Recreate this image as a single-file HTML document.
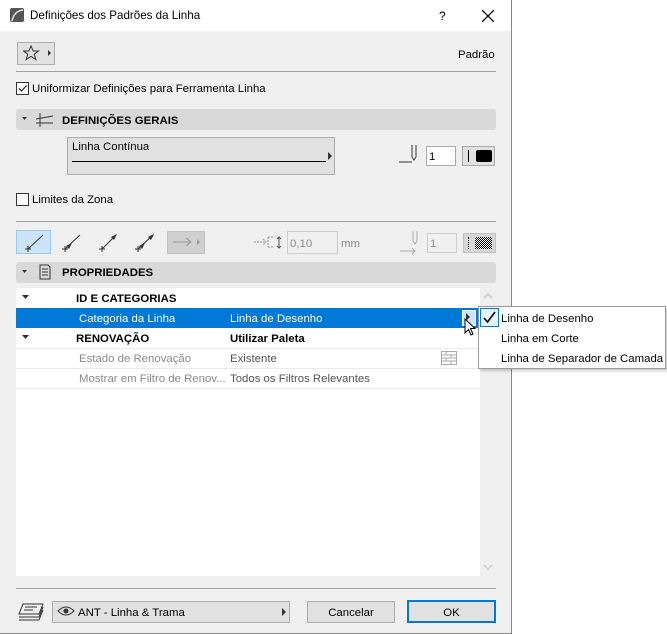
<!DOCTYPE html>
<html><head><meta charset="utf-8"><style>
*{margin:0;padding:0;box-sizing:border-box}
body{width:667px;height:634px;background:#fff;position:relative;overflow:hidden;font-family:"Liberation Sans",sans-serif;font-size:11.4px;color:#000}
.a{position:absolute}
.t{position:absolute;white-space:nowrap;line-height:14px;margin-top:1px}
.b{font-weight:bold}
.g{color:#8a8a8a}
</style></head><body>
<div class="a" style="left:0;top:0;width:512px;height:634px;background:#f0f0f0;border-right:1px solid #888;border-bottom:1px solid #888"></div>
<div class="a" style="left:0;top:0;width:511px;height:31px;background:#fff"></div>
<svg class="a" style="left:10px;top:8px" width="14" height="14"><rect width="14" height="14" rx="2" fill="#555"/><path d="M2 13 Q4 3 13 2" stroke="#ddd" stroke-width="1.5" fill="none"/></svg>
<div class="t" style="left:30px;top:8px;font-size:11.6px">Definições dos Padrões da Linha</div>
<div class="t" style="left:439px;top:8px;font-size:12px">?</div>
<svg class="a" style="left:482px;top:10px" width="12" height="12"><path d="M0 0L12 12M12 0L0 12" stroke="#000" stroke-width="1.2"/></svg>

<div class="a" style="left:17px;top:42px;width:38px;height:23px;background:#e1e1e1;border:1px solid #adadad"></div>
<svg class="a" style="left:23px;top:45px" width="30" height="17"><path d="M8 1L10.2 6H15.5L11.2 9.2L12.8 14.5L8 11.3L3.2 14.5L4.8 9.2L0.5 6H5.8Z" fill="none" stroke="#333"/><path d="M25 5L28 8L25 11Z" fill="#333"/></svg>
<div class="t" style="left:458px;top:47px">Padrão</div>
<div class="a" style="left:16px;top:71px;width:480px;height:1px;background:#a0a0a0"></div>

<div class="a" style="left:16px;top:82px;width:13px;height:13px;border:1px solid #333;background:#fff"></div>
<svg class="a" style="left:17px;top:83px" width="11" height="11"><path d="M2 5.5L4.5 8L9.5 2.5" stroke="#222" fill="none" stroke-width="1.2"/></svg>
<div class="t" style="left:32px;top:81px">Uniformizar Definições para Ferramenta Linha</div>

<div class="a" style="left:16px;top:109px;width:480px;height:21px;background:#d9d9d9;border-radius:3px"></div>
<svg class="a" style="left:20px;top:112px" width="36" height="16"><path d="M2 5L7 5L4.5 8Z" fill="#333"/><path d="M20 1V15M16 7L33 4M16 11H33" stroke="#333" fill="none"/></svg>
<div class="t b" style="left:62px;top:113px">DEFINIÇÕES GERAIS</div>

<div class="a" style="left:67px;top:137px;width:268px;height:38px;background:#e1e1e1;border:1px solid #adadad"></div>
<div class="t" style="left:72px;top:139px">Linha Contínua</div>
<div class="a" style="left:72px;top:161px;width:254px;height:1px;background:#000"></div>
<svg class="a" style="left:328px;top:152px" width="5" height="8"><path d="M0 0L4 4L0 8Z" fill="#333"/></svg>
<svg class="a" style="left:399px;top:145px" width="20" height="20"><path d="M0 17H13M13 0V12L15 15L17 12V0" stroke="#333" fill="none"/></svg>
<div class="a" style="left:426px;top:146px;width:30px;height:20px;background:#fff;border:1px solid #aaa"></div>
<div class="t" style="left:429px;top:149px">1</div>
<div class="a" style="left:462px;top:146px;width:33px;height:20px;background:#e1e1e1;border:1px solid #adadad"></div>
<div class="a" style="left:468px;top:150px;width:1px;height:12px;background:#000"></div>
<div class="a" style="left:476px;top:150px;width:16px;height:12px;background:#000;border-radius:2px"></div>

<div class="a" style="left:16px;top:193px;width:13px;height:13px;border:1px solid #333;background:#fff"></div>
<div class="t" style="left:32px;top:192px">Limites da Zona</div>
<div class="a" style="left:16px;top:221px;width:480px;height:1px;background:#a0a0a0"></div>

<div class="a" style="left:16px;top:230px;width:35px;height:24px;background:#cce4f7;border:1px solid #99c9ef"></div>
<svg class="a" style="left:16px;top:230px" width="140" height="24"><g stroke="#333" fill="none"><path d="M12 19L27 5M9 19H15M12 16V22"/><path d="M49 19L64 5M46 19H52M49 16V22"/><path d="M86 19L100 5M83 19H89M86 16V22"/><path d="M122 19L137 5M119 19H125M122 16V22"/></g><path d="M50 16L56 13L53 19Z" fill="#333"/><path d="M101 4L95 7L98 10Z" fill="#333"/><path d="M123 16L129 13L126 19Z" fill="#333"/><path d="M138 4L132 7L135 10Z" fill="#333"/></svg>
<div class="a" style="left:167px;top:231px;width:38px;height:23px;background:#d0d0d0;border:1px solid #c0c0c0"></div>
<svg class="a" style="left:172px;top:235px" width="30" height="15"><path d="M1 7H19M14 3L19 7L14 11" stroke="#999" fill="none"/><path d="M25 4L28 7L25 10Z" fill="#999"/></svg>
<svg class="a" style="left:254px;top:234px" width="30" height="18"><path d="M0 8H12M9 5L12 8L9 11M14 3V13M14 3H20M14 13H20" stroke="#999" fill="none" stroke-dasharray="2 1"/><path d="M25 3V14M23 5L25 3L27 5M23 12L25 14L27 12" stroke="#555" fill="none"/></svg>
<div class="a" style="left:287px;top:231px;width:51px;height:23px;background:#f0f0f0;border:1px solid #ccc"></div>
<div class="t g" style="left:290px;top:236px">0,10</div>
<div class="t g" style="left:341px;top:236px">mm</div>
<svg class="a" style="left:400px;top:231px" width="24" height="24"><path d="M13 0V10L15 13L17 10V0M0 20H15M12 17L15 20L12 23" stroke="#aaa" fill="none"/></svg>
<div class="a" style="left:427px;top:233px;width:30px;height:20px;background:#f0f0f0;border:1px solid #ccc"></div>
<div class="t g" style="left:430px;top:236px">1</div>
<div class="a" style="left:463px;top:233px;width:33px;height:20px;background:#d6d6d6;border:1px solid #c0c0c0"></div>
<div class="a" style="left:468px;top:237px;width:1px;height:12px;border-left:1px dotted #000"></div>
<div class="a" style="left:475px;top:237px;width:17px;height:12px;background:repeating-conic-gradient(#000 0 25%,#fff 0 50%) 0 0/2px 2px"></div>

<div class="a" style="left:16px;top:262px;width:480px;height:21px;background:#d9d9d9;border-radius:3px"></div>
<svg class="a" style="left:20px;top:264px" width="36" height="17"><path d="M2 6L7 6L4.5 9Z" fill="#333"/><path d="M20 1H28L30 3V15H20Z M22 5H28M22 8H28M22 11H28" stroke="#333" fill="none"/></svg>
<div class="t b" style="left:62px;top:265px">PROPRIEDADES</div>

<div class="a" style="left:16px;top:288px;width:464px;height:288px;background:#fff"></div>
<div class="a" style="left:480px;top:288px;width:16px;height:288px;background:#f0f0f0"></div>
<svg class="a" style="left:483px;top:292px" width="10" height="8"><path d="M1 6L5 2L9 6" stroke="#ccc" fill="none" stroke-width="1.5"/></svg>
<svg class="a" style="left:483px;top:563px" width="10" height="8"><path d="M1 2L5 6L9 2" stroke="#ccc" fill="none" stroke-width="1.5"/></svg>
<svg class="a" style="left:22px;top:295px" width="8" height="6"><path d="M0 0H7L3.5 4Z" fill="#333"/></svg>
<div class="t b" style="left:76px;top:291px">ID E CATEGORIAS</div>
<div class="a" style="left:16px;top:308px;width:464px;height:20px;background:#0078d7"></div>
<div class="t" style="left:79px;top:311px;color:#fff">Categoria da Linha</div>
<div class="t" style="left:230px;top:311px;color:#fff">Linha de Desenho</div>
<div class="a" style="left:462px;top:310px;width:14px;height:16px;background:#cce4f7;border:1px solid #fff"></div>
<svg class="a" style="left:466px;top:313px" width="5" height="8"><path d="M0 0L4 4L0 8Z" fill="#333"/></svg>
<svg class="a" style="left:464px;top:318px" width="14" height="20"><path d="M1 1V15L4.5 11.5L7 17L9 16L6.5 10.5H11Z" fill="#fff" stroke="#000"/></svg>
<svg class="a" style="left:22px;top:335px" width="8" height="6"><path d="M0 0H7L3.5 4Z" fill="#333"/></svg>
<div class="t b" style="left:76px;top:331px">RENOVAÇÃO</div>
<div class="t b" style="left:230px;top:331px">Utilizar Paleta</div>
<div class="a" style="left:16px;top:348px;width:464px;height:1px;background:#eaeaea"></div>
<div class="t g" style="left:79px;top:351px">Estado de Renovação</div>
<div class="t" style="left:230px;top:351px;color:#555">Existente</div>
<svg class="a" style="left:441px;top:350px" width="16" height="16"><path d="M0.5 1.5H15.5V14.5H0.5ZM0.5 5H15.5M0.5 8H15.5M0.5 11H15.5M5 1.5V5M10 5V8M5 8V11M10 11V14.5" stroke="#aaa" fill="none"/></svg>
<div class="a" style="left:16px;top:368px;width:464px;height:1px;background:#eaeaea"></div>
<div class="t g" style="left:79px;top:371px">Mostrar em Filtro de Renov...</div>
<div class="t" style="left:230px;top:371px;color:#555">Todos os Filtros Relevantes</div>
<div class="a" style="left:16px;top:388px;width:464px;height:1px;background:#eaeaea"></div>

<div class="a" style="left:16px;top:588px;width:480px;height:1px;background:#a0a0a0"></div>
<svg class="a" style="left:17px;top:602px" width="28" height="20"><path d="M6 2H26L22 12H2ZM2 15H22L26 5M2 18H22L26 8M8 5H20M7 8H16" stroke="#333" fill="none"/></svg>
<div class="a" style="left:52px;top:601px;width:238px;height:22px;background:#e1e1e1;border:1px solid #adadad"></div>
<svg class="a" style="left:57px;top:605px" width="18" height="12"><path d="M1 6Q9 -2 17 6Q9 14 1 6Z" stroke="#333" fill="none"/><circle cx="9" cy="6" r="2.5" fill="#333"/></svg>
<div class="t" style="left:78px;top:605px">ANT - Linha &amp; Trama</div>
<svg class="a" style="left:282px;top:608px" width="5" height="8"><path d="M0 0L4 4L0 8Z" fill="#333"/></svg>
<div class="a" style="left:307px;top:601px;width:88px;height:22px;background:#e1e1e1;border:1px solid #adadad"></div>
<div class="t" style="left:307px;top:605px;width:88px;text-align:center">Cancelar</div>
<div class="a" style="left:407px;top:600px;width:89px;height:23px;background:#e1e1e1;border:2px solid #0078d7"></div>
<div class="t" style="left:407px;top:605px;width:89px;text-align:center">OK</div>

<div class="a" style="left:478px;top:306px;width:188px;height:63px;background:#fff;border:1px solid #999;box-shadow:2px 2px 3px rgba(0,0,0,.2)"></div>
<div class="a" style="left:480px;top:308px;width:19px;height:19px;border:1px solid #0078d7;background:#e5f1fb"></div>
<svg class="a" style="left:482px;top:311px" width="15" height="13"><path d="M2 7L5.5 11L13 1" stroke="#000" fill="none" stroke-width="1.6"/></svg>
<div class="t" style="left:501px;top:311px">Linha de Desenho</div>
<div class="t" style="left:501px;top:331px">Linha em Corte</div>
<div class="t" style="left:501px;top:351px">Linha de Separador de Camada</div>
</body></html>
